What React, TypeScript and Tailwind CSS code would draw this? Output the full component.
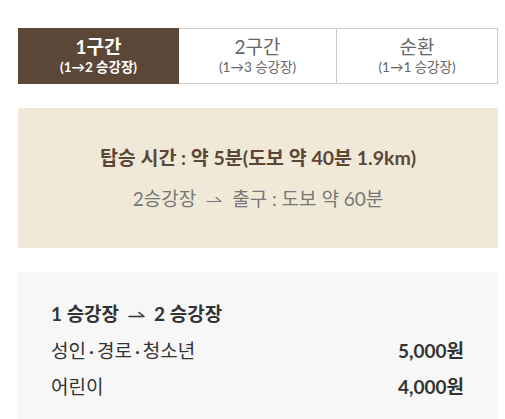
import React from "react";

const font = { fontFamily: "Lato, 'Noto Sans CJK KR', sans-serif" };

function Harpoon({ w = 16, sw = 1.4 }: { w?: number; sw?: number }) {
  return (
    <svg width={w} height="8" viewBox={`0 0 ${w} 8`} className="inline-block align-middle" fill="none">
      <path d={`M1 6.5 H${w - 1} L${w - 6} 2.5`} stroke="currentColor" strokeWidth={sw} strokeLinecap="round" strokeLinejoin="round" />
    </svg>
  );
}

export default function App() {
  const tabs = [
    { t: "1구간", s: "(1→2 승강장)", active: true },
    { t: "2구간", s: "(1→3 승강장)", active: false },
    { t: "순환", s: "(1→1 승강장)", active: false },
  ];
  return (
    <div className="w-[505px] h-[419px] overflow-hidden bg-white pl-[18px] pr-[7px] pt-[28px]" style={font}>
      <div className="flex h-[56px]">
        {tabs.map((tab, i) => (
          <div
            key={i}
            className={
              tab.active
                ? "w-[161px] flex flex-col items-center justify-center bg-[#5b4737] text-white"
                : i === 1
                ? "w-[158px] flex flex-col items-center justify-center border-y border-r border-[#cccccc] text-[#666666]"
                : "flex-1 flex flex-col items-center justify-center border-y border-r border-[#cccccc] text-[#666666]"
            }
          >
            <div className={tab.active ? "text-[19px] leading-[22px] font-bold" : "text-[19px] leading-[22px]"}>{tab.t}</div>
            <div className={tab.active ? "text-[13.5px] leading-[18px] font-bold" : "text-[13.5px] leading-[18px]"}>{tab.s}</div>
          </div>
        ))}
      </div>
      <div className="mt-[24px] h-[140px] bg-[#f1e9d8] flex flex-col items-center justify-center">
        <div className="text-[19.5px] leading-[26px] font-bold text-[#5b4737]">탑승 시간 : 약 5분(도보 약 40분 1.9km)</div>
        <div className="mt-[16px] text-[19px] leading-[24px] text-[#777777] flex items-center">
          <span>2승강장</span>
          <span className="mx-[10px] flex"><Harpoon w={16} sw={1.2} /></span>
          <span>출구 : 도보 약 60분</span>
        </div>
      </div>
      <div className="mt-[24px] h-[160px] bg-[#f7f7f7] pl-[33px] pr-[34px] pt-[29px] text-[19px] text-[#333333]">
        <div className="leading-[26px] font-bold flex items-center">
          <span>1 승강장</span>
          <span className="mx-[9px] flex"><Harpoon w={17} sw={1.6} /></span>
          <span>2 승강장</span>
        </div>
        <div className="mt-[11px] flex justify-between leading-[26px]">
          <span>
            성인<span className="mx-[3px]">·</span>경로<span className="mx-[3px]">·</span>청소년
          </span>
          <span className="font-bold">5,000원</span>
        </div>
        <div className="mt-[10px] flex justify-between leading-[26px]">
          <span>어린이</span>
          <span className="font-bold">4,000원</span>
        </div>
      </div>
    </div>
  );
}
